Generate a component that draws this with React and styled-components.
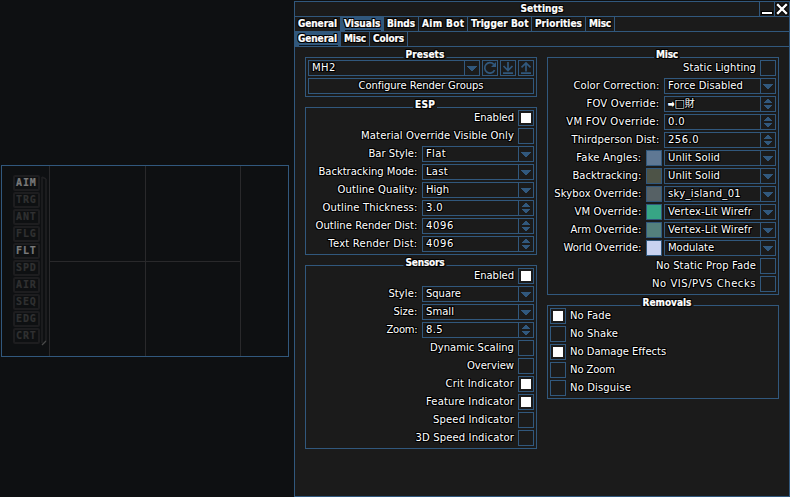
import React from "react";
import styled, { createGlobalStyle, css } from "styled-components";

const BLUE = "#31587d";
const PANEL = "#1b1b1b";

const GlobalStyle = createGlobalStyle`
  * { box-sizing: border-box; }
  body { margin: 0; background: #0e1012; overflow: hidden; }
`;

const outline = css`
  text-shadow: -1px -1px #000, 0 -1px #000, 1px -1px #000, -1px 0 #000,
    1px 0 #000, -1px 1px #000, 0 1px #000, 1px 1px #000;
`;

const Screen = styled.main`
  display: flex;
  width: 790px;
  height: 497px;
  background: #0e1012;
  color: #fff;
  font: 10px/14px "DejaVu Sans", Verdana, sans-serif;
  white-space: nowrap;
`;

const Text = styled.span`
  letter-spacing: ${(p) => p.$ls ?? 0.1}px;
  ${outline}
`;

const BoldText = styled(Text)`
  font-family: "DejaVu Sans Condensed", "DejaVu Sans", sans-serif;
  font-weight: bold;
  font-stretch: condensed;
  -webkit-text-stroke: 0.2px #fff;
`;

/* Radar */
const Viewport = styled.section`
  width: 294px;
  padding: 165px 0 0 1px;
`;

const Radar = styled.div`
  display: flex;
  width: 288px;
  height: 192px;
  border: 1px solid ${BLUE};
`;

const Indicators = styled.div`
  display: flex;
  gap: 1px;
  width: 47px;
  padding: 9px 0 0 11px;
`;

const BadgeList = styled.div`
  display: flex;
  flex-direction: column;
  gap: 1px;
`;

const Badge = styled.span`
  display: block;
  width: 27px;
  height: 16px;
  border: 2px solid #1d1d1f;
  border-radius: 2px;
  color: ${(p) => (p.$on ? "#7a7a7a" : "#303031")};
  font: bold 10px/12px "DejaVu Sans Mono", monospace;
  letter-spacing: 0.9px;
  padding-left: 1px;
  -webkit-text-stroke: 0.2px currentColor;
`;

const Bracket = styled.svg`
  display: block;
  margin-top: 1px;
`;

const Quadrant = styled.div`
  display: grid;
  width: 192px;
  grid-template-columns: 96px 95px;
  grid-template-rows: 96px 94px;
  border-left: 1px solid #29292b;
`;

const Cell = styled.div`
  border-right: 1px solid #29292b;
  border-bottom: ${(p) => (p.$top ? "1px solid #29292b" : "0")};
`;

/* Window */
const Window = styled.section`
  display: flex;
  flex-direction: column;
  width: 496px;
  height: 496px;
  margin-top: 1px;
  border: 1px solid ${BLUE};
  background: ${PANEL};
`;

const TitleBar = styled.header`
  display: grid;
  grid-template-columns: 1fr 15px 15px;
  height: 15px;
  border-bottom: 1px solid ${BLUE};
`;

const WindowTitle = styled.div`
  padding-left: 30px;
  text-align: center;
`;

const TitleButton = styled.button`
  padding: 0;
  border: 0;
  border-left: 1px solid ${BLUE};
  background: none;
  svg { display: block; }
`;

const TabBar = styled.nav`
  display: flex;
  height: 15px;
  border-bottom: 1px solid ${BLUE};
`;

const Tab = styled.div`
  width: ${(p) => p.$w}px;
  height: 14px;
  padding-left: 3px;
  border-right: 1px solid ${BLUE};
  background: ${(p) => (p.$active ? BLUE : "none")};
`;

const TabUnderline = styled.div`
  height: 1px;
  margin: -1px 2px 0 1px;
  background: #0c1620;
`;

const Columns = styled.div`
  display: flex;
  justify-content: space-between;
  padding: 10px 10px 0;
`;

const Column = styled.div`
  display: flex;
  flex-direction: column;
  gap: 10px;
  width: 232px;
`;

const Group = styled.section`
  position: relative;
  display: flex;
  flex-direction: column;
  gap: 2px;
  padding: 2px;
  border: 1px solid ${BLUE};
`;

const GroupTitle = styled.h2`
  position: absolute;
  top: -10px;
  left: 50%;
  margin: 0 0 0 4px;
  padding: 0 2px;
  transform: translateX(-50%);
  background: linear-gradient(transparent 8px, ${PANEL} 8px, ${PANEL} 11px, transparent 11px);
  font: inherit;
`;

const Row = styled.div`
  display: flex;
  justify-content: ${(p) => (p.$left ? "flex-start" : "flex-end")};
  gap: 2px;
  height: 16px;
`;

const Label = styled.label`
  padding: 1px ${(p) => (p.$after ? 0 : 2)}px 0 ${(p) => (p.$after ? 2 : 0)}px;
`;

const FieldLabel = styled(Label)`
  padding-right: 2.6px;
`;

const Check = styled.span`
  width: 16px;
  height: 16px;
  padding: 2px;
  border: 1px solid ${BLUE};
  &::after {
    content: "";
    display: block;
    width: 10px;
    height: 10px;
    background: ${(p) => (p.$on ? "#fff" : "transparent")};
  }
`;

const Swatch = styled.span`
  width: 16px;
  height: 16px;
  border: 1px solid ${BLUE};
  background: ${(p) => p.$color};
`;

const Field = styled.div`
  display: flex;
  width: ${(p) => p.$w || 112}px;
  height: 16px;
  border: 1px solid ${BLUE};
  svg { display: block; }
`;

const FieldValue = styled.div`
  flex: 1;
  min-width: 0;
  padding-left: 3px;
`;

const FieldButton = styled.span`
  width: 15px;
  border-left: 1px solid ${BLUE};
`;

const IconButton = styled.button`
  width: 16px;
  height: 16px;
  padding: 0;
  border: 1px solid ${BLUE};
  background: none;
  svg { display: block; }
`;

const WideButton = styled.button`
  width: 226px;
  height: 16px;
  padding: 0;
  border: 1px solid ${BLUE};
  background: none;
  color: inherit;
  font: inherit;
`;

const IconGap = styled.span`
  display: flex;
  gap: 2px;
`;

const Glyph = styled.span`
  font-size: ${(p) => p.$size}px;
  letter-spacing: ${(p) => p.$ls}px;
  line-height: 12px;
  font-family: "DejaVu Sans", "Noto Sans CJK JP", sans-serif;
  -webkit-text-stroke: ${(p) => p.$stroke || 0}px #fff;
`;

const Svg = ({ children }) => (
  <svg width="14" height="14" viewBox="0 0 14 14" fill="none" stroke={BLUE} strokeWidth="1.7">
    {children}
  </svg>
);

const Down = () => (
  <Svg><path d="M2 5h10v1h-1v1h-1v1H9v1H8v1H6V9H5V8H4V7H3V6H2z" fill={BLUE} stroke="none" /></Svg>
);
const Spin = () => (
  <Svg>
    <path d="M6 2h2v1h1v1h1v1h1v1H3V5h1V4h1V3h1zM3 8h8v1h-1v1H9v1H8v1H6v-1H5v-1H4V9H3z" fill={BLUE} stroke="none" />
  </Svg>
);

const badges = ["AIM", "TRG", "ANT", "FLG", "FLT", "SPD", "AIR", "SEQ", "EDG", "CRT"];

const tabs = [
  ["General", 46, -0.09], ["Visuals", 43, 0.04], ["Binds", 35, -0.03], ["Aim Bot", 49, 0.37],
  ["Trigger Bot", 64, 0.1], ["Priorities", 54, 0.03], ["Misc", 29, -0.2],
];
const subTabs = [["General", 46, -0.09], ["Misc", 29, -0.2], ["Colors", 38, -0.14]];

const Tabs = ({ items, active }) => (
  <TabBar>
    {items.map(([name, w, ls]) => (
      <Tab key={name} $w={w} $active={name === active}>
        <BoldText $ls={ls}>{name}</BoldText>
        {name === active && <TabUnderline />}
      </Tab>
    ))}
  </TabBar>
);

const CheckRow = ({ label, on, ls, left }) => (
  <Row $left={left}>
    {left && <Check $on={on} />}
    <Label $after={left}><Text $ls={ls}>{label}</Text></Label>
    {!left && <Check $on={on} />}
  </Row>
);

const FieldRow = ({ label, value, ls, vls, spin, color }) => (
  <Row>
    <FieldLabel><Text $ls={ls}>{label}:</Text></FieldLabel>
    {color && <Swatch $color={color} />}
    <Field>
      <FieldValue><Text $ls={vls}>{value}</Text></FieldValue>
      <FieldButton>{spin ? <Spin /> : <Down />}</FieldButton>
    </Field>
  </Row>
);

const Section = ({ title, ls, children }) => (
  <Group>
    <GroupTitle><BoldText $ls={ls}>{title}</BoldText></GroupTitle>
    {children}
  </Group>
);

export default function App() {
  return (
    <Screen>
      <GlobalStyle />
      <Viewport>
        <Radar>
          <Indicators>
            <BadgeList>
              {badges.map((b) => (
                <Badge key={b} $on={b === "AIM" || b === "FLT"}>{b}</Badge>
              ))}
            </BadgeList>
            <Bracket width="6" height="171" fill="none">
              <path d="M1 1v166M5 3v162M1 1l4 2" stroke="#202022" strokeWidth="1.6" />
              <path d="M1 169l4-4" stroke="#4a4a4a" strokeWidth="1.3" />
            </Bracket>
          </Indicators>
          <Quadrant><Cell $top /><Cell $top /><Cell /><Cell /></Quadrant>
        </Radar>
      </Viewport>
      <Window>
        <TitleBar>
          <WindowTitle><BoldText $ls={0.06}>Settings</BoldText></WindowTitle>
          <TitleButton aria-label="Minimize">
            <svg width="14" height="14"><path d="M1 9h12v4H1z" fill="#000" /><path d="M2 10h10v2H2z" fill="#fff" /></svg>
          </TitleButton>
          <TitleButton aria-label="Close">
            <svg width="14" height="14" fill="none">
              <path d="M3 3l8 8M11 3l-8 8" stroke="#000" strokeWidth="4.5" strokeLinecap="square" />
              <path d="M3 3l8 8M11 3l-8 8" stroke="#fff" strokeWidth="2.4" strokeLinecap="square" />
            </svg>
          </TitleButton>
        </TitleBar>
        <Tabs items={tabs} active="Visuals" />
        <Tabs items={subTabs} active="General" />
        <Columns>
          <Column>
            <Section title="Presets" ls={0.1}>
              <Row>
                <Field $w={172}>
                  <FieldValue><Text $ls={0.4}>MH2</Text></FieldValue>
                  <FieldButton><Down /></FieldButton>
                </Field>
                <IconGap>
                  <IconButton aria-label="Reload">
                    <Svg><path d="M11.6 9.2a5.2 5.2 0 1 1-.8-5.8" /><path d="M13 1v5H8z" fill={BLUE} stroke="none" /></Svg>
                  </IconButton>
                  <IconButton aria-label="Load">
                    <Svg><path d="M7 1v8M2.5 5l4.5 4.5L11.5 5M2 12.2h10" /></Svg>
                  </IconButton>
                  <IconButton aria-label="Save">
                    <Svg><path d="M7 2v8.5M2.5 6.4L7 1.9l4.5 4.5M2 12.2h10" /></Svg>
                  </IconButton>
                </IconGap>
              </Row>
              <Row><WideButton><Text $ls={-0.05}>Configure Render Groups</Text></WideButton></Row>
            </Section>
            <Section title="ESP" ls={0.25}>
              <CheckRow label="Enabled" on ls={-0.06} />
              <CheckRow label="Material Override Visible Only" ls={0.13} />
              <FieldRow label="Bar Style" value="Flat" ls={0.02} vls={0.35} />
              <FieldRow label="Backtracking Mode" value="Last" ls={0} vls={0.29} />
              <FieldRow label="Outline Quality" value="High" ls={0.14} vls={0} />
              <FieldRow label="Outline Thickness" value="3.0" ls={0.16} vls={0.36} spin />
              <FieldRow label="Outline Render Dist" value="4096" ls={0.04} vls={0.64} spin />
              <FieldRow label="Text Render Dist" value="4096" ls={0.23} vls={0.64} spin />
            </Section>
            <Section title="Sensors" ls={-0.19}>
              <CheckRow label="Enabled" on ls={-0.06} />
              <FieldRow label="Style" value="Square" ls={0.08} vls={-0.04} />
              <FieldRow label="Size" value="Small" ls={0.02} vls={0.04} />
              <FieldRow label="Zoom" value="8.5" ls={-0.24} vls={0.36} spin />
              <CheckRow label="Dynamic Scaling" ls={0.03} />
              <CheckRow label="Overview" ls={0} />
              <CheckRow label="Crit Indicator" on ls={0.24} />
              <CheckRow label="Feature Indicator" on ls={0.17} />
              <CheckRow label="Speed Indicator" ls={0.15} />
              <CheckRow label="3D Speed Indicator" ls={0.14} />
            </Section>
          </Column>
          <Column>
            <Section title="Misc" ls={-0.2}>
              <CheckRow label="Static Lighting" ls={0.05} />
              <FieldRow label="Color Correction" value="Force Disabled" ls={0.09} vls={0.09} />
              <FieldRow
                label="FOV Override"
                value={<><Glyph $size={8} $ls={-0.3} $stroke={0.6}>➡</Glyph><Glyph $size={11} $ls={0}>□</Glyph><Glyph $size={10} $ls={0}>財</Glyph></>}
                ls={0.22}
                spin
              />
              <FieldRow label="VM FOV Override" value="0.0" ls={0.27} vls={0.36} spin />
              <FieldRow label="Thirdperson Dist" value="256.0" ls={0.12} vls={0.47} spin />
              <FieldRow label="Fake Angles" value="Unlit Solid" ls={0.19} vls={0.12} color="#5f7894" />
              <FieldRow label="Backtracking" value="Unlit Solid" ls={0.03} vls={0.12} color="#4d5347" />
              <FieldRow label="Skybox Override" value="sky_island_01" ls={0.09} vls={0.32} color="#566165" />
              <FieldRow label="VM Override" value="Vertex-Lit Wirefr" ls={0.14} vls={0.16} color="#37a585" />
              <FieldRow label="Arm Override" value="Vertex-Lit Wirefr" ls={0.05} vls={0.16} color="#54807c" />
              <FieldRow label="World Override" value="Modulate" ls={-0.03} vls={-0.05} color="#c8d2f0" />
              <CheckRow label="No Static Prop Fade" ls={0.14} />
              <CheckRow label="No VIS/PVS Checks" ls={0.55} />
            </Section>
            <Section title="Removals" ls={0}>
              <CheckRow left label="No Fade" on ls={0.11} />
              <CheckRow left label="No Shake" ls={0.1} />
              <CheckRow left label="No Damage Effects" on ls={-0.01} />
              <CheckRow left label="No Zoom" ls={-0.09} />
              <CheckRow left label="No Disguise" ls={0.15} />
            </Section>
          </Column>
        </Columns>
      </Window>
    </Screen>
  );
}
